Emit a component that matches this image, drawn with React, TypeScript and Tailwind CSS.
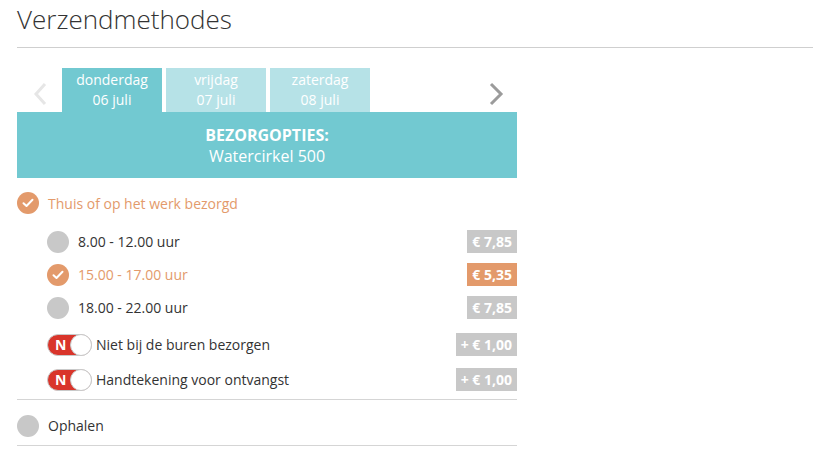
import React from 'react';

const tabs = [
  { day: 'donderdag', date: '06 juli', active: true },
  { day: 'vrijdag', date: '07 juli', active: false },
  { day: 'zaterdag', date: '08 juli', active: false },
];

const slots = [
  { label: '8.00 - 12.00 uur', price: '€ 7,85', selected: false },
  { label: '15.00 - 17.00 uur', price: '€ 5,35', selected: true },
  { label: '18.00 - 22.00 uur', price: '€ 7,85', selected: false },
];

const extras = [
  { label: 'Niet bij de buren bezorgen', price: '+ € 1,00' },
  { label: 'Handtekening voor ontvangst', price: '+ € 1,00' },
];

function Radio({ checked }: { checked: boolean }) {
  if (!checked) {
    return <span className="w-[22px] h-[22px] rounded-full bg-[#c8c8c8] shrink-0" />;
  }
  return (
    <span className="w-[22px] h-[22px] rounded-full bg-[#e39a6b] shrink-0 flex items-center justify-center">
      <svg width="12" height="10" viewBox="0 0 12 10" fill="none">
        <path d="M1.5 5.2 L4.5 8 L10.5 1.8" stroke="white" strokeWidth="2" strokeLinecap="round" strokeLinejoin="round" />
      </svg>
    </span>
  );
}

function Badge({ text, active }: { text: string; active?: boolean }) {
  return (
    <span
      className={`h-[23px] px-[5px] flex items-center text-[14px] font-bold text-white ${
        active ? 'bg-[#e39a6b]' : 'bg-[#c8c8c8]'
      }`}
    >
      {text}
    </span>
  );
}

function Toggle() {
  return (
    <span className="relative w-[45px] h-[22px] rounded-full bg-[#d9352b] border border-[#c9c9c9] shrink-0 flex items-center">
      <span className="pl-[7px] text-[14px] font-bold text-white leading-none">N</span>
      <span className="absolute right-[-1px] top-[-1px] w-[22px] h-[22px] rounded-full bg-white border border-[#c9c9c9]" />
    </span>
  );
}

export default function App() {
  return (
    <div className="w-[813px] h-[459px] bg-white text-[#333] font-['Open_Sans',sans-serif] pl-[17px] overflow-hidden">
      <h1 className="text-[26px] font-light leading-[36px] pt-[1px] h-[48px] border-b border-[#cfcfcf]">
        Verzendmethodes
      </h1>

      <div className="w-[500px]">
        {/* date tabs */}
        <div className="mt-[20px] flex items-end h-[44px]">
          <div className="w-[45px] h-full flex items-center justify-center pt-[8px]">
            <svg width="14" height="24" viewBox="0 0 14 24" fill="none">
              <path d="M12 2 L3 12 L12 22" stroke="#e6e6e6" strokeWidth="3" />
            </svg>
          </div>
          <div className="flex gap-[4px]">
            {tabs.map((t) => (
              <div
                key={t.day}
                className={`w-[100px] h-[44px] pt-[2px] text-center text-white text-[14px] leading-[20px] ${
                  t.active ? 'bg-[#72c9d1]' : 'bg-[#b6e2e7]'
                }`}
              >
                <div>{t.day}</div>
                <div>{t.date}</div>
              </div>
            ))}
          </div>
          <div className="flex-1 h-full flex items-center justify-end pr-[12px] pt-[8px]">
            <svg width="16" height="24" viewBox="0 0 16 24" fill="none">
              <path d="M2 2 L12 12 L2 22" stroke="#9b9b9b" strokeWidth="3" />
            </svg>
          </div>
        </div>

        {/* banner */}
        <div className="h-[66px] bg-[#72c9d1] text-white text-center pt-[13px]">
          <div className="text-[16px] font-bold leading-[21px]">BEZORGOPTIES:</div>
          <div className="text-[16px] leading-[21px]">Watercirkel 500</div>
        </div>

        {/* delivery at home */}
        <div className="mt-[14px] flex items-center gap-[9px] h-[22px]">
          <Radio checked />
          <span className="text-[14px] text-[#e39a6b]">Thuis of op het werk bezorgd</span>
        </div>

        <div className="pl-[30px] mt-[16px] flex flex-col gap-[10px]">
          {slots.map((s) => (
            <div key={s.label} className="flex items-center h-[23px]">
              <Radio checked={s.selected} />
              <span className={`ml-[9px] text-[14px] flex-1 ${s.selected ? 'text-[#e39a6b]' : ''}`}>{s.label}</span>
              <Badge text={s.price} active={s.selected} />
            </div>
          ))}
        </div>

        <div className="pl-[30px] mt-[14px] flex flex-col gap-[12px] pb-[8px] border-b border-[#d5d5d5]">
          {extras.map((e) => (
            <div key={e.label} className="flex items-center h-[23px]">
              <Toggle />
              <span className="ml-[4px] text-[14px] flex-1">{e.label}</span>
              <Badge text={e.price} />
            </div>
          ))}
        </div>

        <div className="h-[46px] pt-[15px] flex items-start gap-[9px] border-b border-[#d5d5d5]">
          <Radio checked={false} />
          <span className="text-[14px] leading-[22px]">Ophalen</span>
        </div>
      </div>
    </div>
  );
}
